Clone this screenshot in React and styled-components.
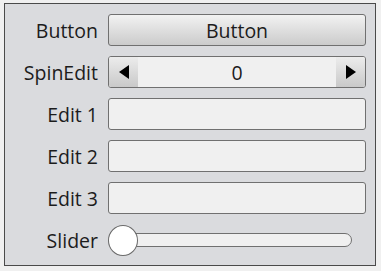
import React from "react";
import styled, { createGlobalStyle } from "styled-components";

const GlobalStyle = createGlobalStyle`
  html, body {
    margin: 0;
    padding: 0;
    background: #f0f0f0;
    font-family: "Open Sans", "Noto Sans", sans-serif;
  }
`;

const Frame = styled.div`
  box-sizing: border-box;
  margin: 3px 0 0 4px;
  width: 372px;
  height: 263px;
  border: 1px solid #4a4a4a;
  background: #dadbde;
  padding: 10px 9px 0 10px;
  display: grid;
  grid-template-columns: 83px 1fr;
  grid-auto-rows: 32px;
  column-gap: 10px;
  row-gap: 10px;
`;

const Label = styled.div`
  display: flex;
  align-items: center;
  justify-content: flex-end;
  font-size: 19.5px;
  color: #1c1c1c;
  white-space: nowrap;
  padding-top: 1px;
`;

const PushButton = styled.button`
  box-sizing: border-box;
  height: 32px;
  border: 1px solid #707070;
  border-radius: 3px;
  background: linear-gradient(#f2f2f2, #cbcbcb);
  font-family: inherit;
  font-size: 19.5px;
  color: #1c1c1c;
  padding: 0;
`;

const Spin = styled.div`
  box-sizing: border-box;
  height: 32px;
  border: 1px solid #707070;
  border-radius: 3px;
  background: #f0f0f0;
  display: flex;
  overflow: hidden;
`;

const SpinArrow = styled.div`
  width: 29px;
  display: flex;
  align-items: center;
  justify-content: center;
  background: linear-gradient(#ececec, #c9c9c9);
`;

const SpinValue = styled.div`
  flex: 1;
  display: flex;
  align-items: center;
  justify-content: center;
  font-size: 19.5px;
  color: #1c1c1c;
`;

const Edit = styled.div`
  box-sizing: border-box;
  height: 32px;
  border: 1px solid #707070;
  border-radius: 3px;
  background: #f0f0f0;
`;

const SliderWrap = styled.div`
  position: relative;
  display: flex;
  align-items: center;
  height: 32px;
`;

const Track = styled.div`
  box-sizing: border-box;
  width: 244px;
  height: 14px;
  border: 1px solid #707070;
  border-radius: 7px;
  background: #f0f0f0;
  margin-top: -1px;
`;

const Thumb = styled.div`
  position: absolute;
  left: 0;
  top: 1px;
  box-sizing: border-box;
  width: 30px;
  height: 31px;
  border-radius: 50%;
  border: 1px solid #6a6a6a;
  background: #ffffff;
`;

const Triangle = ({ dir }) => (
  <svg width="10" height="14" viewBox="0 0 10 14">
    {dir === "left" ? (
      <polygon points="10,0 10,14 0,7" fill="#000" />
    ) : (
      <polygon points="0,0 0,14 10,7" fill="#000" />
    )}
  </svg>
);

const App = () => {
  return (
    <>
      <GlobalStyle />
      <Frame>
        <Label>Button</Label>
        <PushButton>Button</PushButton>

        <Label>SpinEdit</Label>
        <Spin>
          <SpinArrow>
            <Triangle dir="left" />
          </SpinArrow>
          <SpinValue>0</SpinValue>
          <SpinArrow>
            <Triangle dir="right" />
          </SpinArrow>
        </Spin>

        <Label>Edit 1</Label>
        <Edit />

        <Label>Edit 2</Label>
        <Edit />

        <Label>Edit 3</Label>
        <Edit />

        <Label>Slider</Label>
        <SliderWrap>
          <Track />
          <Thumb />
        </SliderWrap>
      </Frame>
    </>
  );
};

export default App;
